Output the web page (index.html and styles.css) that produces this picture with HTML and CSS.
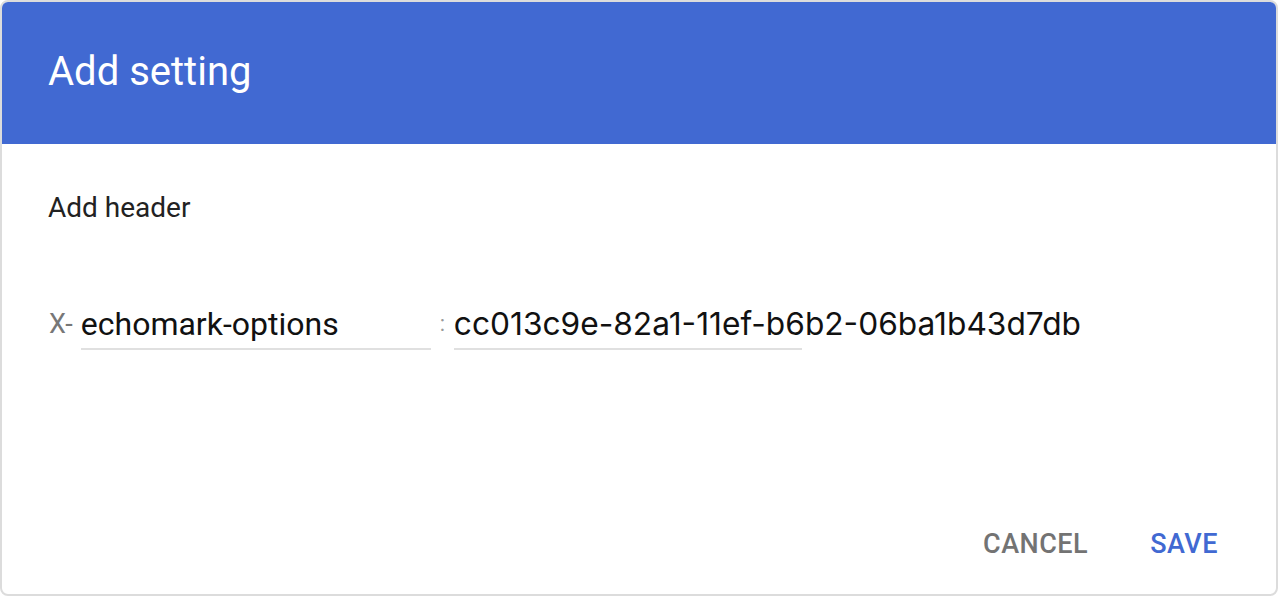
FILE: index.html
```html
<!DOCTYPE html>
<html lang="en">
<head>
    <meta charset="UTF-8">
    <title>Add setting</title>
    <link rel="stylesheet" href="styles.css">
</head>
<body>
    <div class="dialog">
        <div class="dialog-header">
            <h1>Add setting</h1>
        </div>

        <div class="dialog-body">
            <p class="subtitle">Add header</p>

            <!-- header name / value row -->
            <div class="header-row">
                <span class="prefix">X-</span>
                <div class="field name-field">echomark-options</div>
                <span class="colon">:</span>
                <div class="field value-field">cc013c9e-82a1-11ef-b6b2-06ba1b43d7db</div>
            </div>
        </div>

        <div class="dialog-actions">
            <button class="btn btn-cancel">Cancel</button>
            <button class="btn btn-save">Save</button>
        </div>
    </div>
</body>
</html>
```

FILE: styles.css
```css
/* Add setting dialog */
body {
    margin: 0;
    background: #fff;
    font-family: Roboto, "Liberation Sans", sans-serif;
}

.dialog {
    box-sizing: border-box;
    width: 1278px;
    height: 596px;
    border: 2px solid #dcdcdc;
    border-radius: 8px;
    overflow: hidden;
    display: flex;
    flex-direction: column;
}

.dialog-header {
    height: 142px;
    background-color: #4169d2;
    display: flex;
    align-items: center;
    padding-left: 46px;
}

.dialog-header h1 {
    margin: 0;
    color: #fff;
    font-size: 40px;
    font-weight: 400;
    padding-bottom: 4px;
}

.dialog-body {
    flex: 1;
    padding: 0 46px;
}

.subtitle {
    margin: 48px 0 0;
    font-size: 28px;
    color: #222;
    line-height: 32px;
}

.header-row {
    display: flex;
    align-items: flex-start;
    margin-top: 80px;
}

.prefix {
    color: #777;
    font-size: 27px;
    line-height: 40px;
    margin-left: 1px;
    margin-right: 8px;
}

.field {
    box-sizing: border-box;
    height: 46px;
    border-bottom: 2px solid #e0e0e0;
    font-size: 32px;
    line-height: 40px;
    color: #111;
    white-space: nowrap;
}

.name-field {
    width: 350px;
}

.colon {
    color: #999;
    font-size: 22px;
    line-height: 40px;
    width: 23px;
    text-align: center;
}

.value-field {
    width: 348px;
    overflow: visible;
    font-family: Inter, Roboto, sans-serif;
    font-size: 31.7px;
}

.dialog-actions {
    display: flex;
    justify-content: flex-end;
    padding: 0 58px 34px 0;
    gap: 62px;
}

.btn {
    background: none;
    border: none;
    padding: 0;
    font-family: Roboto, sans-serif;
    font-size: 27px;
    font-weight: 500;
    text-transform: uppercase;
    letter-spacing: 0.5px;
    cursor: pointer;
}

.btn-cancel {
    color: #737373;
}

.btn-save {
    color: #4169d2;
}
```
